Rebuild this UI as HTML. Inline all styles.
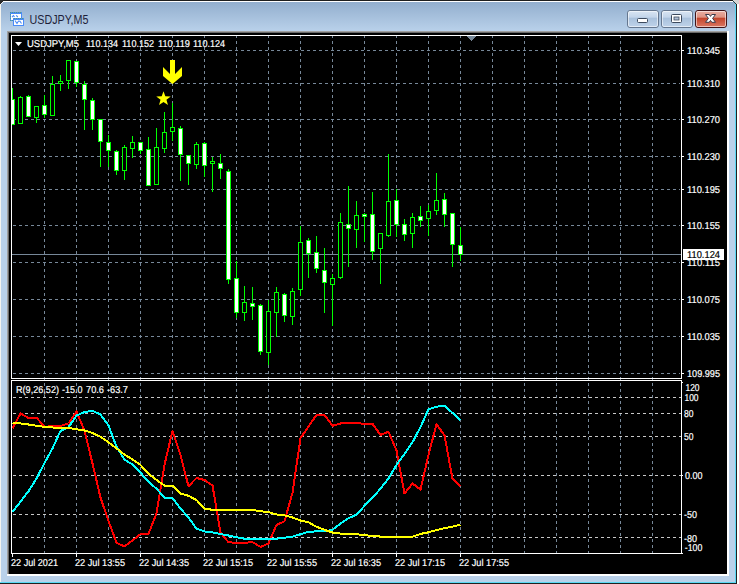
<!DOCTYPE html><html><head><meta charset="utf-8"><style>html,body{margin:0;padding:0;background:#fff;overflow:hidden}svg{display:block}</style></head><body><svg width="739" height="584" viewBox="0 0 739 584" shape-rendering="crispEdges">
<defs><linearGradient id="tg" x1="0" y1="0" x2="0" y2="1"><stop offset="0" stop-color="#90accc"/><stop offset="1" stop-color="#b9d1ea"/></linearGradient><linearGradient id="bg1" x1="0" y1="0" x2="0" y2="1"><stop offset="0" stop-color="#dae6f3"/><stop offset="0.40" stop-color="#c3d5ea"/><stop offset="0.44" stop-color="#a9c1dc"/><stop offset="1" stop-color="#bfd3ea"/></linearGradient><linearGradient id="bg2" x1="0" y1="0" x2="0" y2="1"><stop offset="0" stop-color="#eab0a4"/><stop offset="0.40" stop-color="#de9282"/><stop offset="0.44" stop-color="#c2432a"/><stop offset="1" stop-color="#dc7a66"/></linearGradient><clipPath id="mc"><rect x="12" y="36" width="669" height="342"/></clipPath><clipPath id="ic"><rect x="12" y="381" width="669" height="172"/></clipPath></defs>
<rect x="0" y="0" width="739" height="584" fill="#b9d1ea"/>
<rect x="0" y="0" width="739" height="31" fill="url(#tg)"/>
<rect x="0" y="0" width="733" height="1" fill="#1e1e1e"/>
<rect x="733" y="0" width="6" height="1" fill="#d4d4d4"/>
<rect x="734" y="1" width="5" height="1" fill="#d4d4d4"/>
<rect x="735" y="2" width="4" height="1" fill="#d4d4d4"/>
<rect x="736" y="3" width="3" height="1" fill="#d4d4d4"/>
<rect x="3" y="1" width="730" height="1" fill="#ffffff"/>
<rect x="0" y="4" width="1" height="578" fill="#f4f4f0"/>
<rect x="0" y="0" width="3" height="2" fill="#2a2a2a"/>
<rect x="0" y="2" width="2" height="1" fill="#2a2a2a"/>
<rect x="0" y="3" width="1" height="1" fill="#2a2a2a"/>
<rect x="2" y="2" width="1" height="1" fill="#e8eef4"/>
<rect x="1" y="3" width="1" height="1" fill="#e8eef4"/>
<rect x="2" y="3" width="1" height="1" fill="#a8c0dc"/>
<rect x="733" y="1" width="1" height="1" fill="#1f4a50"/>
<rect x="734" y="2" width="1" height="1" fill="#1f4a50"/>
<rect x="735" y="3" width="1" height="1" fill="#303a3c"/>
<rect x="735" y="4" width="1" height="579" fill="#5ad8f4"/>
<rect x="736" y="4" width="1" height="580" fill="#202020"/>
<rect x="737" y="4" width="2" height="580" fill="#ffffff"/>
<rect x="0" y="582" width="736" height="1" fill="#5ad8f4"/>
<rect x="0" y="583" width="737" height="1" fill="#202020"/>
<rect x="7" y="31" width="722" height="1" fill="#a0a0a0"/>
<rect x="7" y="31" width="1" height="545" fill="#a0a0a0"/>
<rect x="8" y="32" width="720" height="1" fill="#696969"/>
<rect x="8" y="32" width="1" height="543" fill="#696969"/>
<rect x="727" y="31" width="2" height="545" fill="#ffffff"/>
<rect x="7" y="574" width="722" height="2" fill="#ffffff"/>
<rect x="9" y="33" width="718" height="541" fill="#000000"/>
<defs><pattern id="dp" width="2" height="2" patternUnits="userSpaceOnUse"><rect width="2" height="2" fill="#4a8cf8"/><rect width="1" height="1" fill="#4e9a8c"/></pattern></defs>
<rect x="10" y="12" width="12" height="9" fill="url(#dp)"/>
<rect x="11" y="14" width="10" height="6" fill="#ffffff"/>
<rect x="13" y="18" width="11" height="8" fill="url(#dp)"/>
<rect x="14" y="20" width="9" height="5" fill="#ffffff"/>
<polyline points="15,20.5 17,23.5 18.5,21 20,21.2 21.5,23.5" fill="none" stroke="#4a8cf8" stroke-width="1.1" shape-rendering="geometricPrecision"/>
<polyline points="12,17 13.5,15.5 14.5,17" fill="none" stroke="#4a8cf8" stroke-width="1.1" shape-rendering="geometricPrecision"/>
<polyline points="16.2,15.3 17.8,17" fill="none" stroke="#4a8cf8" stroke-width="1.1" shape-rendering="geometricPrecision"/>
<text x="29.5" y="24" font-family="Liberation Sans, sans-serif" font-size="12.5" fill="#1e1e3a" textLength="59" lengthAdjust="spacingAndGlyphs" shape-rendering="geometricPrecision">USDJPY,M5</text>
<rect x="627.5" y="10.5" width="31" height="17" rx="2.5" fill="url(#bg1)" stroke="#65778f" stroke-width="1" shape-rendering="geometricPrecision"/>
<rect x="628.5" y="11.5" width="29" height="15" rx="1.5" fill="none" stroke="rgba(255,255,255,0.55)" stroke-width="1" shape-rendering="geometricPrecision"/>
<rect x="661.5" y="10.5" width="31" height="17" rx="2.5" fill="url(#bg1)" stroke="#65778f" stroke-width="1" shape-rendering="geometricPrecision"/>
<rect x="662.5" y="11.5" width="29" height="15" rx="1.5" fill="none" stroke="rgba(255,255,255,0.55)" stroke-width="1" shape-rendering="geometricPrecision"/>
<rect x="695.5" y="10.5" width="31" height="17" rx="2.5" fill="url(#bg2)" stroke="#401418" stroke-width="1" shape-rendering="geometricPrecision"/>
<rect x="696.5" y="11.5" width="29" height="15" rx="1.5" fill="none" stroke="rgba(255,255,255,0.55)" stroke-width="1" shape-rendering="geometricPrecision"/>
<rect x="637.5" y="18.5" width="10" height="4" rx="1" fill="#ffffff" stroke="#3c4a5e" stroke-width="1" shape-rendering="geometricPrecision"/>
<rect x="671.5" y="14.5" width="10" height="8" rx="1" fill="#ffffff" stroke="#3c4a5e" stroke-width="1" shape-rendering="geometricPrecision"/>
<rect x="674" y="17" width="5" height="3" fill="#aebfd4" stroke="#3c4a5e" stroke-width="0.8" shape-rendering="geometricPrecision"/>
<path d="M705.5,14.5 L709.2,14.5 L710.5,16.4 L711.8,14.5 L715.5,14.5 L712.6,18.4 L715.5,22.3 L711.8,22.3 L710.5,20.4 L709.2,22.3 L705.5,22.3 L708.4,18.4 Z" fill="#ffffff" stroke="#3a3a4a" stroke-width="1" shape-rendering="geometricPrecision"/>
<path d="M13,50.5H680 M13,83.5H680 M13,119.5H680 M13,156.5H680 M13,189.5H680 M13,225.5H680 M13,262.5H680 M13,299.5H680 M13,336.5H680 M13,373.5H680 M44.5,35V378 M76.5,35V378 M108.5,35V378 M140.5,35V378 M172.5,35V378 M204.5,35V378 M236.5,35V378 M268.5,35V378 M300.5,35V378 M332.5,35V378 M364.5,35V378 M396.5,35V378 M428.5,35V378 M460.5,35V378 M492.5,35V378 M524.5,35V378 M556.5,35V378 M588.5,35V378 M620.5,35V378 M652.5,35V378 M44.5,377V553 M76.5,377V553 M108.5,377V553 M140.5,377V553 M172.5,377V553 M204.5,377V553 M236.5,377V553 M268.5,377V553 M300.5,377V553 M332.5,377V553 M364.5,377V553 M396.5,377V553 M428.5,377V553 M460.5,377V553 M492.5,377V553 M524.5,377V553 M556.5,377V553 M588.5,377V553 M620.5,377V553 M652.5,377V553" stroke="#778899" stroke-width="1" stroke-dasharray="3 3" fill="none"/>
<path d="M13,397.5H681 M13,413.5H681 M13,436.5H681 M13,475.5H681 M13,514.5H681 M13,537.5H681" stroke="#c8c8c8" stroke-width="1" stroke-dasharray="3 3" fill="none"/>
<rect x="12" y="254" width="669" height="1" fill="#778899"/>
<g clip-path="url(#mc)"><rect x="12" y="88" width="1" height="37" fill="#00ff00"/><rect x="10" y="99" width="5" height="26" fill="#00ff00"/><rect x="11" y="100" width="3" height="24" fill="#ffffff"/><rect x="20" y="96" width="1" height="28" fill="#00ff00"/><rect x="18" y="97" width="5" height="27" fill="#00ff00"/><rect x="19" y="98" width="3" height="25" fill="#000000"/><rect x="28" y="95" width="1" height="22" fill="#00ff00"/><rect x="26" y="96" width="5" height="21" fill="#00ff00"/><rect x="27" y="97" width="3" height="19" fill="#ffffff"/><rect x="36" y="106" width="1" height="17" fill="#00ff00"/><rect x="34" y="106" width="5" height="12" fill="#00ff00"/><rect x="35" y="107" width="3" height="10" fill="#000000"/><rect x="44" y="95" width="1" height="23" fill="#00ff00"/><rect x="42" y="105" width="5" height="10" fill="#00ff00"/><rect x="43" y="106" width="3" height="8" fill="#ffffff"/><rect x="52" y="76" width="1" height="40" fill="#00ff00"/><rect x="50" y="84" width="5" height="32" fill="#00ff00"/><rect x="51" y="85" width="3" height="30" fill="#000000"/><rect x="60" y="75" width="1" height="16" fill="#00ff00"/><rect x="58" y="81" width="5" height="3" fill="#00ff00"/><rect x="59" y="82" width="3" height="1" fill="#000000"/><rect x="68" y="60" width="1" height="29" fill="#00ff00"/><rect x="66" y="60" width="5" height="21" fill="#00ff00"/><rect x="67" y="61" width="3" height="19" fill="#000000"/><rect x="76" y="61" width="1" height="26" fill="#00ff00"/><rect x="74" y="61" width="5" height="22" fill="#00ff00"/><rect x="75" y="62" width="3" height="20" fill="#ffffff"/><rect x="84" y="81" width="1" height="49" fill="#00ff00"/><rect x="82" y="84" width="5" height="16" fill="#00ff00"/><rect x="83" y="85" width="3" height="14" fill="#ffffff"/><rect x="92" y="98" width="1" height="32" fill="#00ff00"/><rect x="90" y="100" width="5" height="20" fill="#00ff00"/><rect x="91" y="101" width="3" height="18" fill="#ffffff"/><rect x="100" y="119" width="1" height="48" fill="#00ff00"/><rect x="98" y="119" width="5" height="23" fill="#00ff00"/><rect x="99" y="120" width="3" height="21" fill="#ffffff"/><rect x="108" y="135" width="1" height="32" fill="#00ff00"/><rect x="106" y="142" width="5" height="9" fill="#00ff00"/><rect x="107" y="143" width="3" height="7" fill="#ffffff"/><rect x="116" y="150" width="1" height="25" fill="#00ff00"/><rect x="114" y="151" width="5" height="20" fill="#00ff00"/><rect x="115" y="152" width="3" height="18" fill="#ffffff"/><rect x="124" y="145" width="1" height="35" fill="#00ff00"/><rect x="122" y="147" width="5" height="24" fill="#00ff00"/><rect x="123" y="148" width="3" height="22" fill="#000000"/><rect x="132" y="136" width="1" height="22" fill="#00ff00"/><rect x="130" y="142" width="5" height="7" fill="#00ff00"/><rect x="131" y="143" width="3" height="5" fill="#000000"/><rect x="140" y="142" width="1" height="12" fill="#00ff00"/><rect x="138" y="142" width="5" height="9" fill="#00ff00"/><rect x="139" y="143" width="3" height="7" fill="#ffffff"/><rect x="148" y="137" width="1" height="49" fill="#00ff00"/><rect x="146" y="149" width="5" height="37" fill="#00ff00"/><rect x="147" y="150" width="3" height="35" fill="#ffffff"/><rect x="156" y="128" width="1" height="57" fill="#00ff00"/><rect x="154" y="147" width="5" height="38" fill="#00ff00"/><rect x="155" y="148" width="3" height="36" fill="#000000"/><rect x="164" y="112" width="1" height="41" fill="#00ff00"/><rect x="162" y="132" width="5" height="17" fill="#00ff00"/><rect x="163" y="133" width="3" height="15" fill="#000000"/><rect x="172" y="103" width="1" height="38" fill="#00ff00"/><rect x="170" y="127" width="5" height="5" fill="#00ff00"/><rect x="171" y="128" width="3" height="3" fill="#000000"/><rect x="180" y="126" width="1" height="55" fill="#00ff00"/><rect x="178" y="128" width="5" height="27" fill="#00ff00"/><rect x="179" y="129" width="3" height="25" fill="#ffffff"/><rect x="188" y="155" width="1" height="30" fill="#00ff00"/><rect x="186" y="155" width="5" height="9" fill="#00ff00"/><rect x="187" y="156" width="3" height="7" fill="#ffffff"/><rect x="196" y="142" width="1" height="27" fill="#00ff00"/><rect x="194" y="144" width="5" height="21" fill="#00ff00"/><rect x="195" y="145" width="3" height="19" fill="#000000"/><rect x="204" y="142" width="1" height="35" fill="#00ff00"/><rect x="202" y="143" width="5" height="23" fill="#00ff00"/><rect x="203" y="144" width="3" height="21" fill="#ffffff"/><rect x="212" y="157" width="1" height="35" fill="#00ff00"/><rect x="210" y="161" width="5" height="3" fill="#00ff00"/><rect x="211" y="162" width="3" height="1" fill="#000000"/><rect x="220" y="154" width="1" height="25" fill="#00ff00"/><rect x="218" y="163" width="5" height="6" fill="#00ff00"/><rect x="219" y="164" width="3" height="4" fill="#ffffff"/><rect x="228" y="169" width="1" height="115" fill="#00ff00"/><rect x="226" y="171" width="5" height="109" fill="#00ff00"/><rect x="227" y="172" width="3" height="107" fill="#ffffff"/><rect x="236" y="261" width="1" height="57" fill="#00ff00"/><rect x="234" y="278" width="5" height="35" fill="#00ff00"/><rect x="235" y="279" width="3" height="33" fill="#ffffff"/><rect x="244" y="286" width="1" height="35" fill="#00ff00"/><rect x="242" y="302" width="5" height="11" fill="#00ff00"/><rect x="243" y="303" width="3" height="9" fill="#000000"/><rect x="252" y="287" width="1" height="33" fill="#00ff00"/><rect x="250" y="303" width="5" height="4" fill="#00ff00"/><rect x="251" y="304" width="3" height="2" fill="#ffffff"/><rect x="260" y="304" width="1" height="51" fill="#00ff00"/><rect x="258" y="305" width="5" height="47" fill="#00ff00"/><rect x="259" y="306" width="3" height="45" fill="#ffffff"/><rect x="268" y="300" width="1" height="65" fill="#00ff00"/><rect x="266" y="311" width="5" height="42" fill="#00ff00"/><rect x="267" y="312" width="3" height="40" fill="#000000"/><rect x="276" y="287" width="1" height="50" fill="#00ff00"/><rect x="274" y="292" width="5" height="21" fill="#00ff00"/><rect x="275" y="293" width="3" height="19" fill="#000000"/><rect x="284" y="293" width="1" height="29" fill="#00ff00"/><rect x="282" y="294" width="5" height="22" fill="#00ff00"/><rect x="283" y="295" width="3" height="20" fill="#ffffff"/><rect x="292" y="288" width="1" height="37" fill="#00ff00"/><rect x="290" y="291" width="5" height="26" fill="#00ff00"/><rect x="291" y="292" width="3" height="24" fill="#000000"/><rect x="300" y="226" width="1" height="70" fill="#00ff00"/><rect x="298" y="242" width="5" height="48" fill="#00ff00"/><rect x="299" y="243" width="3" height="46" fill="#000000"/><rect x="308" y="238" width="1" height="40" fill="#00ff00"/><rect x="306" y="240" width="5" height="14" fill="#00ff00"/><rect x="307" y="241" width="3" height="12" fill="#ffffff"/><rect x="316" y="236" width="1" height="37" fill="#00ff00"/><rect x="314" y="252" width="5" height="17" fill="#00ff00"/><rect x="315" y="253" width="3" height="15" fill="#ffffff"/><rect x="324" y="248" width="1" height="65" fill="#00ff00"/><rect x="322" y="270" width="5" height="13" fill="#00ff00"/><rect x="323" y="271" width="3" height="11" fill="#ffffff"/><rect x="332" y="274" width="1" height="52" fill="#00ff00"/><rect x="330" y="278" width="5" height="7" fill="#00ff00"/><rect x="331" y="279" width="3" height="5" fill="#000000"/><rect x="340" y="213" width="1" height="66" fill="#00ff00"/><rect x="338" y="222" width="5" height="56" fill="#00ff00"/><rect x="339" y="223" width="3" height="54" fill="#000000"/><rect x="348" y="186" width="1" height="81" fill="#00ff00"/><rect x="346" y="224" width="5" height="5" fill="#00ff00"/><rect x="347" y="225" width="3" height="3" fill="#ffffff"/><rect x="356" y="201" width="1" height="47" fill="#00ff00"/><rect x="354" y="215" width="5" height="15" fill="#00ff00"/><rect x="355" y="216" width="3" height="13" fill="#000000"/><rect x="364" y="213" width="1" height="29" fill="#00ff00"/><rect x="362" y="214" width="5" height="3" fill="#00ff00"/><rect x="363" y="215" width="3" height="1" fill="#ffffff"/><rect x="372" y="192" width="1" height="68" fill="#00ff00"/><rect x="370" y="214" width="5" height="38" fill="#00ff00"/><rect x="371" y="215" width="3" height="36" fill="#ffffff"/><rect x="380" y="233" width="1" height="51" fill="#00ff00"/><rect x="378" y="233" width="5" height="16" fill="#00ff00"/><rect x="379" y="234" width="3" height="14" fill="#000000"/><rect x="388" y="154" width="1" height="83" fill="#00ff00"/><rect x="386" y="201" width="5" height="35" fill="#00ff00"/><rect x="387" y="202" width="3" height="33" fill="#000000"/><rect x="396" y="189" width="1" height="48" fill="#00ff00"/><rect x="394" y="200" width="5" height="25" fill="#00ff00"/><rect x="395" y="201" width="3" height="23" fill="#ffffff"/><rect x="404" y="219" width="1" height="22" fill="#00ff00"/><rect x="402" y="224" width="5" height="11" fill="#00ff00"/><rect x="403" y="225" width="3" height="9" fill="#ffffff"/><rect x="412" y="213" width="1" height="35" fill="#00ff00"/><rect x="410" y="217" width="5" height="17" fill="#00ff00"/><rect x="411" y="218" width="3" height="15" fill="#000000"/><rect x="420" y="206" width="1" height="21" fill="#00ff00"/><rect x="418" y="216" width="5" height="5" fill="#00ff00"/><rect x="419" y="217" width="3" height="3" fill="#ffffff"/><rect x="428" y="205" width="1" height="31" fill="#00ff00"/><rect x="426" y="211" width="5" height="8" fill="#00ff00"/><rect x="427" y="212" width="3" height="6" fill="#000000"/><rect x="436" y="173" width="1" height="42" fill="#00ff00"/><rect x="434" y="200" width="5" height="11" fill="#00ff00"/><rect x="435" y="201" width="3" height="9" fill="#000000"/><rect x="444" y="193" width="1" height="34" fill="#00ff00"/><rect x="442" y="199" width="5" height="16" fill="#00ff00"/><rect x="443" y="200" width="3" height="14" fill="#ffffff"/><rect x="452" y="213" width="1" height="54" fill="#00ff00"/><rect x="450" y="213" width="5" height="32" fill="#00ff00"/><rect x="451" y="214" width="3" height="30" fill="#ffffff"/><rect x="460" y="227" width="1" height="34" fill="#00ff00"/><rect x="458" y="245" width="5" height="10" fill="#00ff00"/><rect x="459" y="246" width="3" height="8" fill="#ffffff"/></g>
<g clip-path="url(#ic)"><polyline points="12.5,428.5 20.5,413.5 28.5,418 36.5,417.6 44.5,426.8 52.5,426.2 60.5,426 68.5,423.5 76.5,411.4 84.5,431 92.5,463.5 100.5,497.6 108.5,520.9 116.5,542.8 124.5,546.5 132.5,540.5 140.5,534.2 148.5,533.9 156.5,513.4 164.5,464.9 172.5,430.9 180.5,455.3 188.5,486.2 196.5,478 204.5,480 212.5,485.5 220.5,532.7 228.5,542.3 236.5,542.8 244.5,542.8 252.5,542.1 260.5,546.9 268.5,543.5 276.5,525 284.5,521.3 292.5,492.8 300.5,438.2 308.5,426.5 316.5,414.9 324.5,414.9 332.5,425.8 340.5,423.5 348.5,423.1 356.5,423.1 364.5,423.8 372.5,423.8 380.5,435 388.5,431.7 396.5,450.5 404.5,493.5 412.5,483.5 420.5,489.5 428.5,455 436.5,424 444.5,435.5 452.5,478.8 460.5,486.3" fill="none" stroke="#ff0000" stroke-width="2" stroke-linejoin="round" shape-rendering="crispEdges"/><polyline points="12.5,512 20.5,501.6 28.5,491.3 36.5,478.5 44.5,463 52.5,448.4 60.5,430.9 68.5,427.2 76.5,415.5 84.5,412 92.5,410.8 100.5,414.5 108.5,425.5 116.5,446.6 124.5,459.7 132.5,464.5 140.5,472.7 148.5,481.8 156.5,488.7 164.5,497.6 172.5,498 180.5,508.6 188.5,517.5 196.5,528.6 204.5,531.4 212.5,532.4 220.5,534 228.5,535.5 236.5,537.3 244.5,538.7 252.5,538.7 260.5,538.7 268.5,538.7 276.5,538.7 284.5,537.7 292.5,536.6 300.5,534.2 308.5,531.8 316.5,531.4 324.5,531.4 332.5,529.8 340.5,523.6 348.5,518.2 356.5,514.7 364.5,505.8 372.5,497.8 380.5,488.7 388.5,478.4 396.5,464.9 404.5,453.9 412.5,442.3 420.5,427 428.5,409.2 436.5,406.7 444.5,405.9 452.5,412.9 460.5,420.4" fill="none" stroke="#00ffff" stroke-width="2" stroke-linejoin="round" shape-rendering="crispEdges"/><polyline points="12.5,423 20.5,423.5 28.5,424.5 36.5,425.8 44.5,426.8 52.5,427.5 60.5,427.9 68.5,428 76.5,429.2 84.5,430.5 92.5,433 100.5,436.8 108.5,442.3 116.5,448.4 124.5,454.6 132.5,459.4 140.5,464.9 148.5,473.8 156.5,479.8 164.5,485.7 172.5,485.7 180.5,493.5 188.5,495.8 196.5,500 204.5,508.6 212.5,509.8 220.5,509.9 228.5,509.9 236.5,509.9 244.5,509.9 252.5,509.9 260.5,511.3 268.5,512 276.5,514.5 284.5,515.4 292.5,517.5 300.5,520.5 308.5,522.3 316.5,526.8 324.5,529.8 332.5,532.5 340.5,533.6 348.5,533.9 356.5,534.2 364.5,535.3 372.5,535.8 380.5,536.6 388.5,536.6 396.5,536.6 404.5,536.6 412.5,536.6 420.5,533.9 428.5,532.3 436.5,530 444.5,528.2 452.5,526.6 460.5,524.5" fill="none" stroke="#ffff00" stroke-width="2" stroke-linejoin="round" shape-rendering="crispEdges"/></g>
<rect x="11" y="35" width="671" height="1" fill="#ffffff"/>
<rect x="11" y="35" width="1" height="344" fill="#ffffff"/>
<rect x="681" y="35" width="1" height="344" fill="#ffffff"/>
<rect x="11" y="378" width="671" height="1" fill="#ffffff"/>
<rect x="11" y="380" width="671" height="1" fill="#ffffff"/>
<rect x="11" y="380" width="1" height="174" fill="#ffffff"/>
<rect x="681" y="380" width="1" height="174" fill="#ffffff"/>
<rect x="11" y="553" width="671" height="1" fill="#ffffff"/>
<rect x="682" y="50" width="2" height="1" fill="#ffffff"/>
<rect x="682" y="83" width="2" height="1" fill="#ffffff"/>
<rect x="682" y="119" width="2" height="1" fill="#ffffff"/>
<rect x="682" y="156" width="2" height="1" fill="#ffffff"/>
<rect x="682" y="189" width="2" height="1" fill="#ffffff"/>
<rect x="682" y="225" width="2" height="1" fill="#ffffff"/>
<rect x="682" y="262" width="2" height="1" fill="#ffffff"/>
<rect x="682" y="299" width="2" height="1" fill="#ffffff"/>
<rect x="682" y="336" width="2" height="1" fill="#ffffff"/>
<rect x="682" y="373" width="2" height="1" fill="#ffffff"/>
<rect x="682" y="475" width="1" height="1" fill="#ffffff"/>
<rect x="682" y="382" width="1" height="1" fill="#ffffff"/>
<rect x="682" y="553" width="1" height="1" fill="#ffffff"/>
<rect x="12" y="554" width="1" height="3" fill="#ffffff"/>
<rect x="76" y="554" width="1" height="3" fill="#ffffff"/>
<rect x="140" y="554" width="1" height="3" fill="#ffffff"/>
<rect x="204" y="554" width="1" height="3" fill="#ffffff"/>
<rect x="268" y="554" width="1" height="3" fill="#ffffff"/>
<rect x="332" y="554" width="1" height="3" fill="#ffffff"/>
<rect x="396" y="554" width="1" height="3" fill="#ffffff"/>
<rect x="460" y="554" width="1" height="3" fill="#ffffff"/>
<rect x="467" y="36" width="9" height="1" fill="#778899"/>
<rect x="468" y="37" width="7" height="1" fill="#778899"/>
<rect x="469" y="38" width="5" height="1" fill="#778899"/>
<rect x="470" y="39" width="3" height="1" fill="#778899"/>
<rect x="471" y="40" width="1" height="1" fill="#778899"/>
<path d="M170,60 L175,60 L175,74 L182,67 L182,76 L172.5,84 L163,76 L163,67 L170,74 Z" fill="#ffff00" shape-rendering="geometricPrecision"/>
<polygon points="163.50,91.20 165.32,96.29 170.73,96.45 166.45,99.76 167.97,104.95 163.50,101.90 159.03,104.95 160.55,99.76 156.27,96.45 161.68,96.29" fill="#ffff00" shape-rendering="geometricPrecision"/>
<path d="M15,42 H22 L18.5,46 Z" fill="#ffffff" shape-rendering="geometricPrecision"/>
<text x="27" y="47" font-family="Liberation Sans, sans-serif" font-size="10" fill="#ffffff" stroke="#ffffff" stroke-width="0.2" textLength="52" lengthAdjust="spacingAndGlyphs" text-rendering="geometricPrecision">USDJPY,M5</text>
<text x="86" y="47" font-family="Liberation Sans, sans-serif" font-size="10" fill="#ffffff" stroke="#ffffff" stroke-width="0.2" textLength="32" lengthAdjust="spacingAndGlyphs" text-rendering="geometricPrecision">110.134</text>
<text x="122" y="47" font-family="Liberation Sans, sans-serif" font-size="10" fill="#ffffff" stroke="#ffffff" stroke-width="0.2" textLength="32" lengthAdjust="spacingAndGlyphs" text-rendering="geometricPrecision">110.152</text>
<text x="158" y="47" font-family="Liberation Sans, sans-serif" font-size="10" fill="#ffffff" stroke="#ffffff" stroke-width="0.2" textLength="32" lengthAdjust="spacingAndGlyphs" text-rendering="geometricPrecision">110.119</text>
<text x="193" y="47" font-family="Liberation Sans, sans-serif" font-size="10" fill="#ffffff" stroke="#ffffff" stroke-width="0.2" textLength="32" lengthAdjust="spacingAndGlyphs" text-rendering="geometricPrecision">110.124</text>
<text x="16" y="393" font-family="Liberation Sans, sans-serif" font-size="10" fill="#ffffff" stroke="#ffffff" stroke-width="0.2" textLength="43" lengthAdjust="spacingAndGlyphs" text-rendering="geometricPrecision">R(9,26,52)</text>
<text x="62" y="393" font-family="Liberation Sans, sans-serif" font-size="10" fill="#ffffff" stroke="#ffffff" stroke-width="0.2" textLength="20.5" lengthAdjust="spacingAndGlyphs" text-rendering="geometricPrecision">-15.0</text>
<text x="86" y="393" font-family="Liberation Sans, sans-serif" font-size="10" fill="#ffffff" stroke="#ffffff" stroke-width="0.2" textLength="18" lengthAdjust="spacingAndGlyphs" text-rendering="geometricPrecision">70.6</text>
<text x="107" y="393" font-family="Liberation Sans, sans-serif" font-size="10" fill="#ffffff" stroke="#ffffff" stroke-width="0.2" textLength="21" lengthAdjust="spacingAndGlyphs" text-rendering="geometricPrecision">-63.7</text>
<text x="687" y="54" font-family="Liberation Sans, sans-serif" font-size="10" fill="#ffffff" stroke="#ffffff" stroke-width="0.2" textLength="33" lengthAdjust="spacingAndGlyphs" text-rendering="geometricPrecision">110.345</text>
<text x="687" y="87" font-family="Liberation Sans, sans-serif" font-size="10" fill="#ffffff" stroke="#ffffff" stroke-width="0.2" textLength="33" lengthAdjust="spacingAndGlyphs" text-rendering="geometricPrecision">110.310</text>
<text x="687" y="123" font-family="Liberation Sans, sans-serif" font-size="10" fill="#ffffff" stroke="#ffffff" stroke-width="0.2" textLength="33" lengthAdjust="spacingAndGlyphs" text-rendering="geometricPrecision">110.270</text>
<text x="687" y="160" font-family="Liberation Sans, sans-serif" font-size="10" fill="#ffffff" stroke="#ffffff" stroke-width="0.2" textLength="33" lengthAdjust="spacingAndGlyphs" text-rendering="geometricPrecision">110.230</text>
<text x="687" y="193" font-family="Liberation Sans, sans-serif" font-size="10" fill="#ffffff" stroke="#ffffff" stroke-width="0.2" textLength="33" lengthAdjust="spacingAndGlyphs" text-rendering="geometricPrecision">110.195</text>
<text x="687" y="229" font-family="Liberation Sans, sans-serif" font-size="10" fill="#ffffff" stroke="#ffffff" stroke-width="0.2" textLength="33" lengthAdjust="spacingAndGlyphs" text-rendering="geometricPrecision">110.155</text>
<text x="687" y="266" font-family="Liberation Sans, sans-serif" font-size="10" fill="#ffffff" stroke="#ffffff" stroke-width="0.2" textLength="33" lengthAdjust="spacingAndGlyphs" text-rendering="geometricPrecision">110.115</text>
<text x="687" y="303" font-family="Liberation Sans, sans-serif" font-size="10" fill="#ffffff" stroke="#ffffff" stroke-width="0.2" textLength="33" lengthAdjust="spacingAndGlyphs" text-rendering="geometricPrecision">110.075</text>
<text x="687" y="340" font-family="Liberation Sans, sans-serif" font-size="10" fill="#ffffff" stroke="#ffffff" stroke-width="0.2" textLength="33" lengthAdjust="spacingAndGlyphs" text-rendering="geometricPrecision">110.035</text>
<text x="687" y="377" font-family="Liberation Sans, sans-serif" font-size="10" fill="#ffffff" stroke="#ffffff" stroke-width="0.2" textLength="33" lengthAdjust="spacingAndGlyphs" text-rendering="geometricPrecision">109.995</text>
<rect x="683" y="249" width="41" height="11" fill="#ffffff"/>
<text x="687" y="258" font-family="Liberation Sans, sans-serif" font-size="10" fill="#000000" stroke="#000000" stroke-width="0.2" textLength="33" lengthAdjust="spacingAndGlyphs" text-rendering="geometricPrecision">110.124</text>
<text x="685.5" y="391" font-family="Liberation Sans, sans-serif" font-size="10" fill="#ffffff" stroke="#ffffff" stroke-width="0.2" textLength="14" lengthAdjust="spacingAndGlyphs" text-rendering="geometricPrecision">120</text>
<text x="684.5" y="401" font-family="Liberation Sans, sans-serif" font-size="10" fill="#ffffff" stroke="#ffffff" stroke-width="0.2" textLength="14" lengthAdjust="spacingAndGlyphs" text-rendering="geometricPrecision">100</text>
<text x="684" y="417" font-family="Liberation Sans, sans-serif" font-size="10" fill="#ffffff" stroke="#ffffff" stroke-width="0.2" textLength="9.5" lengthAdjust="spacingAndGlyphs" text-rendering="geometricPrecision">80</text>
<text x="684" y="440" font-family="Liberation Sans, sans-serif" font-size="10" fill="#ffffff" stroke="#ffffff" stroke-width="0.2" textLength="9.5" lengthAdjust="spacingAndGlyphs" text-rendering="geometricPrecision">50</text>
<text x="685" y="479" font-family="Liberation Sans, sans-serif" font-size="10" fill="#ffffff" stroke="#ffffff" stroke-width="0.2" textLength="17.5" lengthAdjust="spacingAndGlyphs" text-rendering="geometricPrecision">0.00</text>
<text x="684" y="518" font-family="Liberation Sans, sans-serif" font-size="10" fill="#ffffff" stroke="#ffffff" stroke-width="0.2" textLength="13" lengthAdjust="spacingAndGlyphs" text-rendering="geometricPrecision">-50</text>
<text x="684" y="542" font-family="Liberation Sans, sans-serif" font-size="10" fill="#ffffff" stroke="#ffffff" stroke-width="0.2" textLength="13" lengthAdjust="spacingAndGlyphs" text-rendering="geometricPrecision">-80</text>
<text x="684.8" y="551" font-family="Liberation Sans, sans-serif" font-size="10" fill="#ffffff" stroke="#ffffff" stroke-width="0.2" textLength="17.6" lengthAdjust="spacingAndGlyphs" text-rendering="geometricPrecision">-100</text>
<text x="11" y="566" font-family="Liberation Sans, sans-serif" font-size="10" fill="#ffffff" stroke="#ffffff" stroke-width="0.2" textLength="47" lengthAdjust="spacingAndGlyphs" text-rendering="geometricPrecision">22 Jul 2021</text>
<text x="75" y="566" font-family="Liberation Sans, sans-serif" font-size="10" fill="#ffffff" stroke="#ffffff" stroke-width="0.2" textLength="50" lengthAdjust="spacingAndGlyphs" text-rendering="geometricPrecision">22 Jul 13:55</text>
<text x="139" y="566" font-family="Liberation Sans, sans-serif" font-size="10" fill="#ffffff" stroke="#ffffff" stroke-width="0.2" textLength="50" lengthAdjust="spacingAndGlyphs" text-rendering="geometricPrecision">22 Jul 14:35</text>
<text x="203" y="566" font-family="Liberation Sans, sans-serif" font-size="10" fill="#ffffff" stroke="#ffffff" stroke-width="0.2" textLength="50" lengthAdjust="spacingAndGlyphs" text-rendering="geometricPrecision">22 Jul 15:15</text>
<text x="267" y="566" font-family="Liberation Sans, sans-serif" font-size="10" fill="#ffffff" stroke="#ffffff" stroke-width="0.2" textLength="50" lengthAdjust="spacingAndGlyphs" text-rendering="geometricPrecision">22 Jul 15:55</text>
<text x="331" y="566" font-family="Liberation Sans, sans-serif" font-size="10" fill="#ffffff" stroke="#ffffff" stroke-width="0.2" textLength="50" lengthAdjust="spacingAndGlyphs" text-rendering="geometricPrecision">22 Jul 16:35</text>
<text x="395" y="566" font-family="Liberation Sans, sans-serif" font-size="10" fill="#ffffff" stroke="#ffffff" stroke-width="0.2" textLength="50" lengthAdjust="spacingAndGlyphs" text-rendering="geometricPrecision">22 Jul 17:15</text>
<text x="459" y="566" font-family="Liberation Sans, sans-serif" font-size="10" fill="#ffffff" stroke="#ffffff" stroke-width="0.2" textLength="50" lengthAdjust="spacingAndGlyphs" text-rendering="geometricPrecision">22 Jul 17:55</text>
</svg></body></html>
